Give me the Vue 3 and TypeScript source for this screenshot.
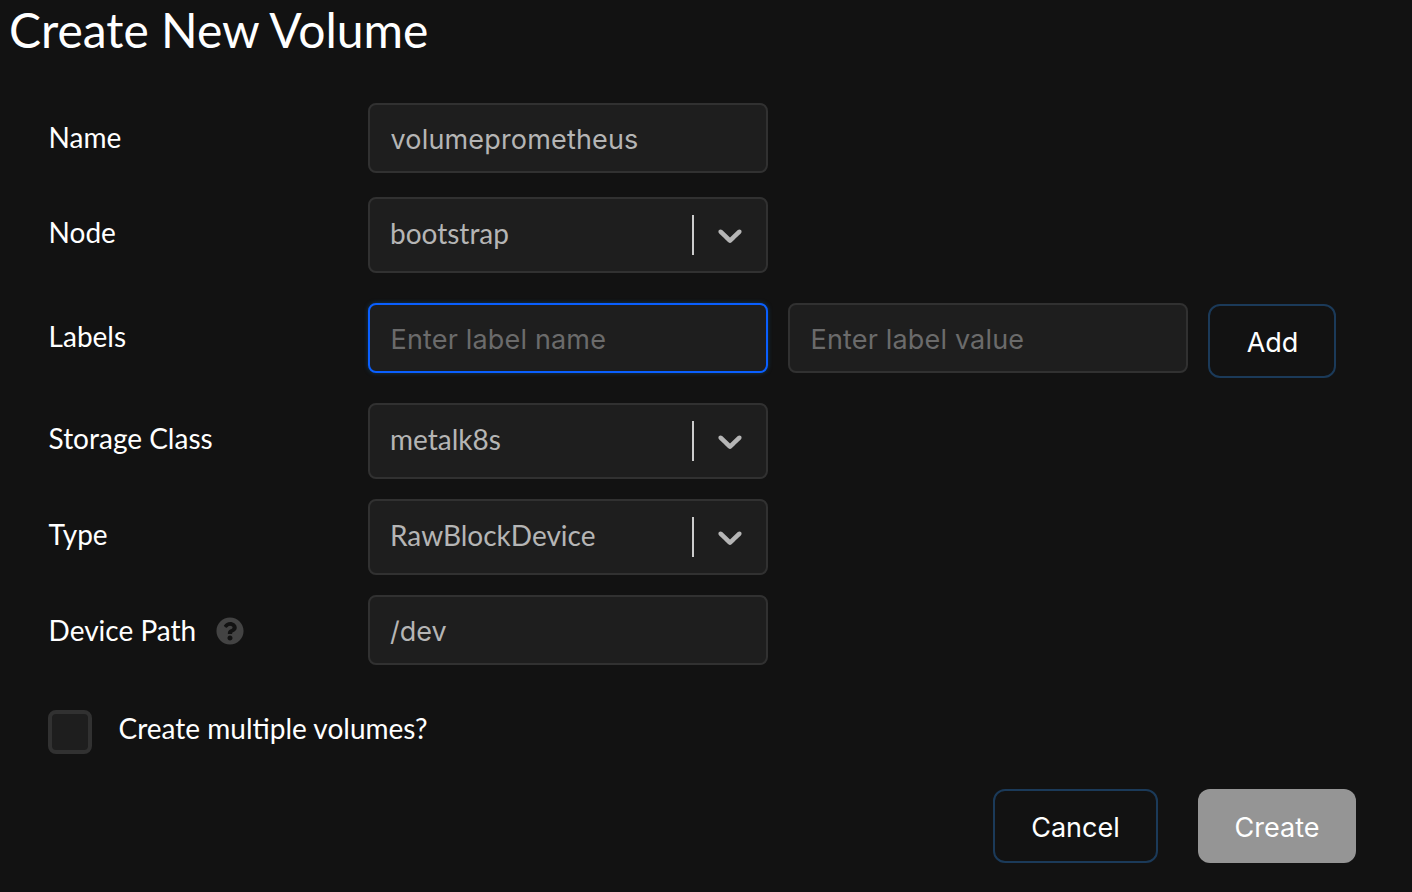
<script setup lang="ts">
import { reactive } from 'vue'

interface VolumeForm {
  name: string
  node: string
  labelName: string
  labelValue: string
  storageClass: string
  type: string
  path: string
  multiple: boolean
}

const form = reactive<VolumeForm>({
  name: 'volumeprometheus',
  node: 'bootstrap',
  labelName: '',
  labelValue: '',
  storageClass: 'metalk8s',
  type: 'RawBlockDevice',
  path: '/dev',
  multiple: false,
})

const chevron =
  'M4.516 7.548c0.436-0.446 1.043-0.481 1.576 0l3.908 3.747 3.908-3.747c0.533-0.481 1.141-0.446 1.574 0 0.436 0.445 0.408 1.197 0 1.615-0.406 0.418-4.695 4.502-4.695 4.502-0.217 0.223-0.502 0.335-0.787 0.335s-0.57-0.112-0.789-0.335c0 0-4.287-4.084-4.695-4.502s-0.436-1.17 0-1.615z'
</script>

<template>
  <main class="page">
    <h1 class="title">Create New Volume</h1>
    <form class="form" @submit.prevent>
      <div class="row row-name">
        <label class="label">Name</label>
        <input v-model="form.name" class="input name" type="text" spellcheck="false" />
      </div>
      <div class="row row-node">
        <label class="label">Node</label>
        <div class="select">
          <span class="value">{{ form.node }}</span>
          <span class="separator"></span>
          <svg class="chevron" viewBox="0 0 20 20"><path :d="chevron" /></svg>
        </div>
      </div>
      <div class="row row-labels">
        <label class="label">Labels</label>
        <div class="pair">
          <input v-model="form.labelName" class="input active" type="text" placeholder="Enter label name" />
          <input v-model="form.labelValue" class="input" type="text" placeholder="Enter label value" />
          <button class="button add" type="button">Add</button>
        </div>
      </div>
      <div class="row row-storage">
        <label class="label">Storage Class</label>
        <div class="select">
          <span class="value">{{ form.storageClass }}</span>
          <span class="separator"></span>
          <svg class="chevron" viewBox="0 0 20 20"><path :d="chevron" /></svg>
        </div>
      </div>
      <div class="row row-type">
        <label class="label">Type</label>
        <div class="select">
          <span class="value">{{ form.type }}</span>
          <span class="separator"></span>
          <svg class="chevron" viewBox="0 0 20 20"><path :d="chevron" /></svg>
        </div>
      </div>
      <div class="row row-path">
        <label class="label">
          Device Path
          <svg class="help" viewBox="0 0 512 512">
            <path
              d="M504 256c0 136.997-111.043 248-248 248S8 392.997 8 256C8 119.083 119.043 8 256 8s248 111.083 248 248zM262.655 90c-54.497 0-89.255 22.957-116.549 63.758-3.536 5.286-2.353 12.415 2.715 16.258l34.699 26.31c5.205 3.947 12.621 3.008 16.665-2.122 17.864-22.658 30.113-35.797 57.303-35.797 20.429 0 45.698 13.148 45.698 32.958 0 14.976-12.363 22.667-32.534 33.976C247.128 238.528 216 254.941 216 296v4c0 6.627 5.373 12 12 12h56c6.627 0 12-5.373 12-12v-1.333c0-28.462 83.186-29.647 83.186-106.667 0-58.002-60.165-102-116.531-102zM256 338c-25.365 0-46 20.635-46 46 0 25.364 20.635 46 46 46s46-20.636 46-46c0-25.365-20.635-46-46-46z"
            />
          </svg>
        </label>
        <input v-model="form.path" class="input path" type="text" spellcheck="false" />
      </div>
      <label class="multiple">
        <input v-model="form.multiple" class="checkbox" type="checkbox" />
        <span class="caption">Create multiple volumes?</span>
      </label>
      <div class="actions">
        <button class="button cancel" type="button">Cancel</button>
        <button class="button create" type="submit" disabled>Create</button>
      </div>
    </form>
  </main>
</template>

<style>
body {
  background: #121212;
}
</style>

<style scoped>
.page {
  box-sizing: border-box;
  height: 892px;
  overflow: hidden;
  background: #121212;
  color: #fff;
  font-family: Lato, sans-serif;
  font-size: 28px;
}
.title {
  margin: 0;
  padding: 1px 0 1px 9px;
  font-size: 48px;
  font-weight: 400;
  line-height: 58px;
}
.form {
  padding: 43px 56px 0 48px;
}
.row {
  display: grid;
  grid-template-columns: 320px 1fr;
}
.row-name {
  height: 94px;
}
.row-node {
  height: 106px;
}
.row-labels {
  height: 100px;
}
.row-storage,
.row-type {
  height: 96px;
}
.row-path {
  height: 70px;
}
.label {
  display: flex;
  align-items: center;
  height: 68px;
  padding-left: 0.6px;
  line-height: 34px;
}
.row-node .label,
.row-storage .label,
.row-type .label,
.row-path .label {
  height: 70px;
}
.row-labels .label {
  height: 66px;
}
.help {
  width: 28px;
  height: 28px;
  margin: 1px 0 0 20px;
  fill: #434343;
}
.input,
.select {
  box-sizing: border-box;
  width: 400px;
  border: 2px solid #313131;
  border-radius: 8px;
  background: #1e1e1e;
  color: #b5b5b5;
}
.input {
  height: 70px;
  margin: 0;
  padding: 2px 20px 0 20.5px;
  outline: none;
  font-family: Inter, sans-serif;
  font-size: 27px;
  letter-spacing: 0.17px;
}
.path {
  padding-left: 20px;
  letter-spacing: 0;
}
.input::placeholder {
  color: #6b6b6b;
  opacity: 1;
}
.active {
  border-color: #0a5fff;
  box-shadow: 0 0 4px #12395a;
}
.select {
  display: flex;
  align-items: center;
  height: 76px;
  padding: 0 16px 0 20px;
}
.value {
  flex: 1;
  line-height: 34px;
  padding-bottom: 4px;
}
.separator {
  width: 2px;
  height: 40px;
  background: #ccc;
}
.chevron {
  width: 40px;
  height: 40px;
  margin-left: 16px;
  fill: #b5b5b5;
}
.pair {
  display: flex;
  align-items: flex-start;
  gap: 20px;
}
.button {
  box-sizing: border-box;
  height: 74px;
  margin: 0;
  padding: 2px 0 0;
  border: 2px solid #1b3a59;
  border-radius: 12px;
  background: transparent;
  color: #fff;
  font-family: Inter, sans-serif;
  font-size: 27px;
}
.add {
  width: 128px;
  margin-top: 1px;
  padding-left: 1px;
}
.multiple {
  display: flex;
  align-items: flex-start;
  margin-top: 45px;
  height: 44px;
}
.checkbox {
  appearance: none;
  box-sizing: border-box;
  width: 44px;
  height: 44px;
  margin: 0 26.6px 0 0;
  border: 4px solid #313131;
  border-radius: 8px;
  background: #1e1e1e;
}
.caption {
  line-height: 34px;
  margin-top: 1px;
}
.actions {
  display: flex;
  justify-content: flex-end;
  gap: 40px;
  margin-top: 35px;
}
.cancel {
  width: 165px;
}
.create {
  width: 158px;
  border: 0;
  background: #959595;
}
</style>
